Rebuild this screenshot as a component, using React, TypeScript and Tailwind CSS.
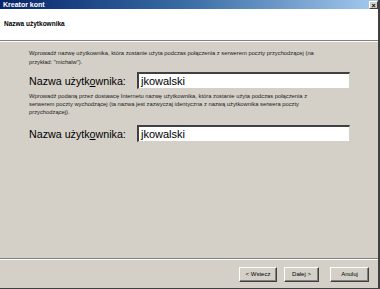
import React from 'react';

const tiny = { fontFamily: '"Liberation Sans", Arial, sans-serif' };

function UserField({ value }: { value: string }) {
  return (
    <div className="flex items-center pl-[29px]">
      <span className="w-[108px] shrink-0 whitespace-nowrap pt-[1px] text-[10.7px] leading-none text-black">
        Nazwa użytk<span className="underline">o</span>wnika:
      </span>
      <div className="flex h-[17px] w-[213px] items-center border-t-2 border-l-2 border-t-[#404040] border-l-[#404040] border-b border-r border-b-[#d4d0c8] border-r-[#d4d0c8] bg-white pl-[2px] pt-[1px] text-[11px] leading-none text-black">
        {value}
      </div>
    </div>
  );
}

function WizButton({ label }: { label: string }) {
  return (
    <button className="flex h-[15px] w-full items-center justify-center border border-t-white border-l-white border-b-[#404040] border-r-[#404040] bg-[#d4d0c8] text-[6px] leading-none text-black shadow-[inset_-1px_-1px_0_#808080]">
      {label}
    </button>
  );
}

export default function App() {
  return (
    <div className="flex h-[289px] w-[380px] flex-col overflow-hidden border-r-2 border-b border-r-[#404040] border-b-[#404040] bg-[#d4d0c8]" style={tiny}>
      <div className="relative flex h-[9px] items-center bg-gradient-to-r from-[#0a246a] via-[#3a6ea5] to-[#a6caf0] pl-[3px]">
        <span className="text-[7px] font-bold leading-none text-white">Kreator kont</span>
        <div className="absolute right-[0px] top-[1px] flex h-[8px] w-[9px] items-center justify-center border border-t-white border-l-white border-b-[#404040] border-r-[#404040] bg-[#d4d0c8] text-[7px] font-bold leading-none text-black">
          ×
        </div>
      </div>

      <div className="flex h-[31px] items-center bg-white pl-[4px]">
        <span className="text-[6.5px] font-bold leading-none text-black">Nazwa użytkownika</span>
      </div>
      <div className="h-px bg-[#808080]" />
      <div className="h-px bg-white" />

      <div className="pt-[7px] pl-[29px] text-[5.8px] leading-[9px] text-[#202020]">
        <div className="whitespace-nowrap">Wprowadź nazwę użytkownika, która zostanie użyta podczas połączenia z serwerem poczty przychodzącej (na</div>
        <div className="whitespace-nowrap">przykład: "michalw").</div>
      </div>

      <div className="pt-[5px]">
        <UserField value="jkowalski" />
      </div>

      <div className="pt-[3px] pl-[29px] text-[5.8px] leading-[8px] text-[#202020]">
        <div className="whitespace-nowrap">Wprowadź podaną przez dostawcę Internetu nazwę użytkownika, która zostanie użyta podczas połączenia z</div>
        <div className="whitespace-nowrap">serwerem poczty wychodzącej (ta nazwa jest zazwyczaj identyczna z nazwą użytkownika serwera poczty</div>
        <div className="whitespace-nowrap">przychodzącej).</div>
      </div>

      <div className="pt-[9px]">
        <UserField value="jkowalski" />
      </div>

      <div className="flex-1" />

      <div className="h-px bg-[#808080]" />
      <div className="h-px bg-white" />

      <div className="flex h-[28px] items-center justify-end pr-[9px]">
        <div className="w-[38px]"><WizButton label="< Wstecz" /></div>
        <div className="ml-[7px] w-[35px]"><WizButton label="Dalej >" /></div>
        <div className="ml-[11px] w-[39px]"><WizButton label="Anuluj" /></div>
      </div>
    </div>
  );
}
